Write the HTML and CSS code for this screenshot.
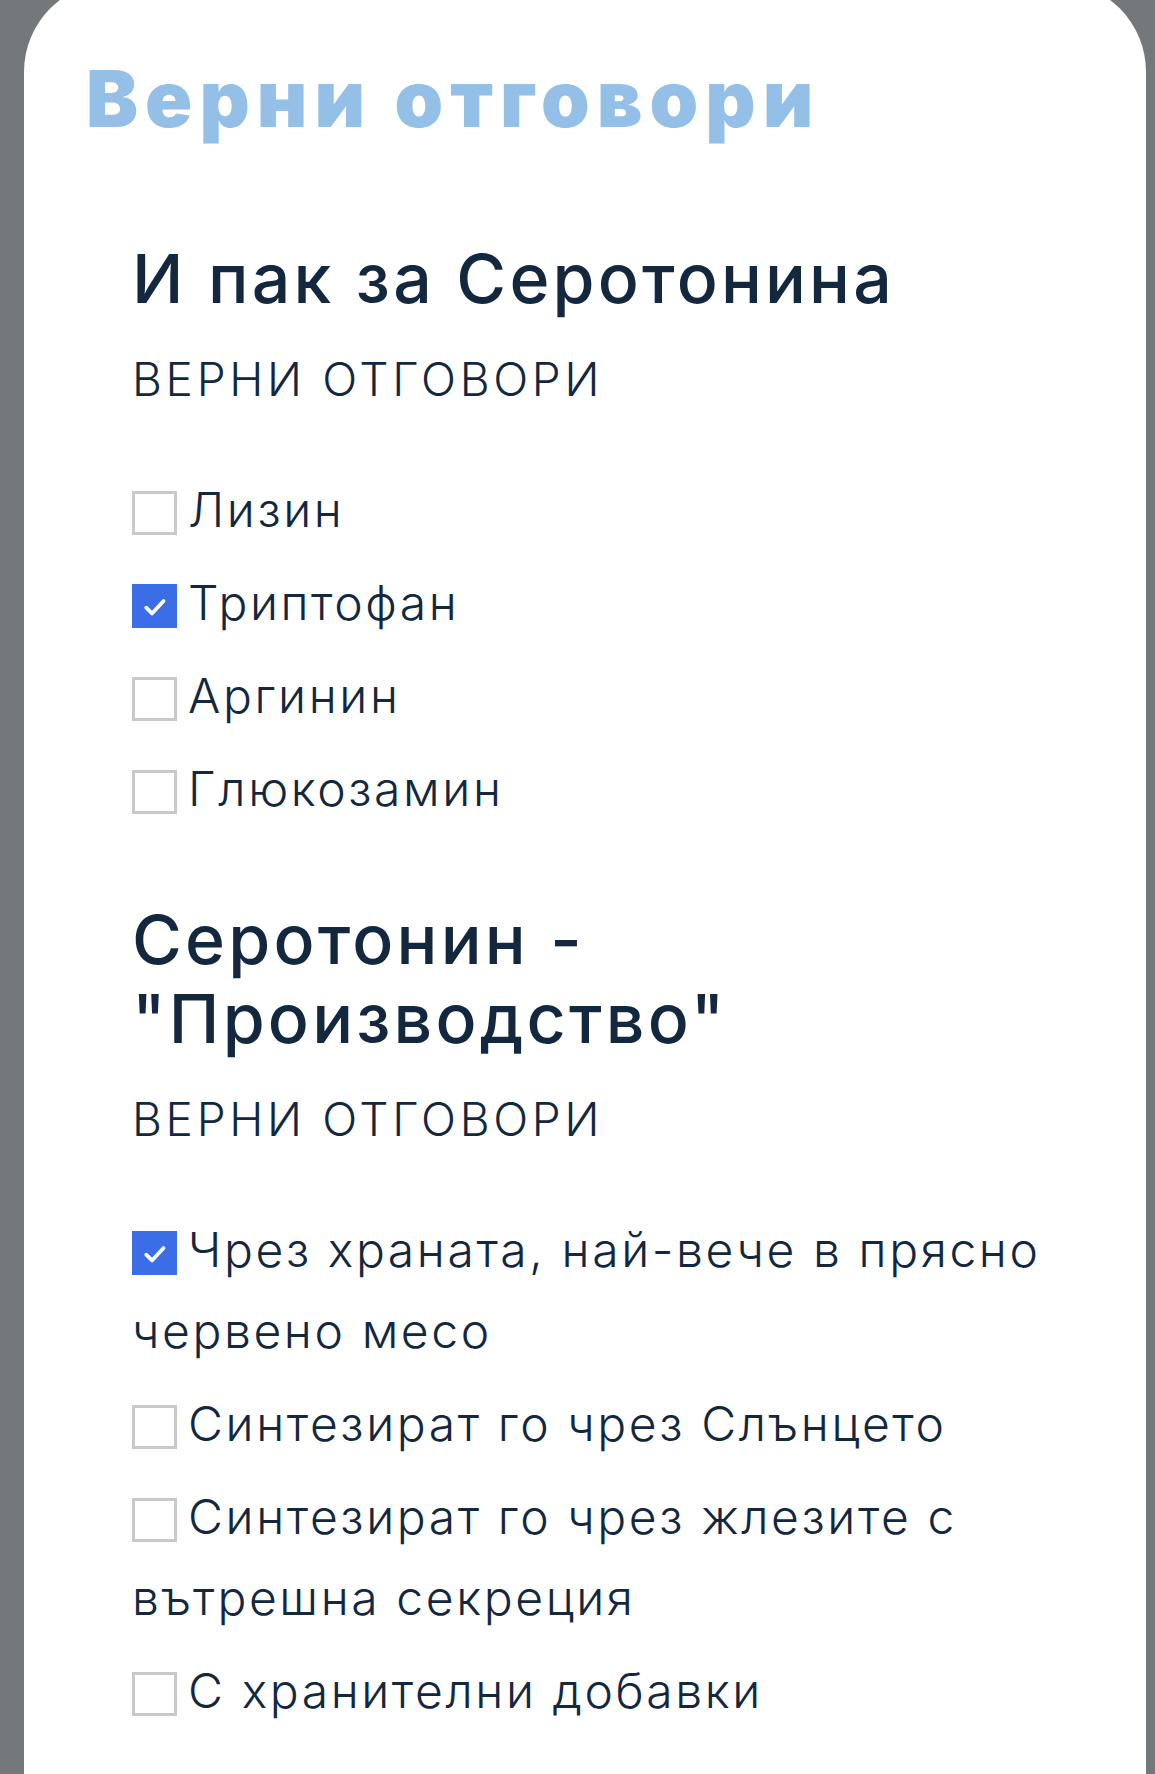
FILE: index.html
```html
<!DOCTYPE html>
<html lang="bg">
<head>
<meta charset="utf-8">
<title>Верни отговори</title>
<link rel="stylesheet" href="styles.css">
</head>
<body>
<main class="card">
  <h1 class="page-title">Верни отговори</h1>

  <section class="quiz">
    <h2 class="q-title">И пак за Серотонина</h2>
    <p class="q-label">ВЕРНИ ОТГОВОРИ</p>
    <ul class="options">
      <li class="option"><span class="box"></span>Лизин</li>
      <li class="option"><span class="box checked"><svg viewBox="0 0 46 46" class="tick"><path d="M13 25 L20 32 L34 17"/></svg></span>Триптофан</li>
      <li class="option"><span class="box"></span>Аргинин</li>
      <li class="option"><span class="box"></span>Глюкозамин</li>
    </ul>
  </section>

  <section class="quiz quiz-next">
    <h2 class="q-title">Серотонин - "Производство"</h2>
    <p class="q-label">ВЕРНИ ОТГОВОРИ</p>
    <ul class="options">
      <li class="option"><span class="box checked"><svg viewBox="0 0 46 46" class="tick"><path d="M13 25 L20 32 L34 17"/></svg></span>Чрез храната, най-вече в прясно червено месо</li>
      <li class="option"><span class="box"></span>Синтезират го чрез Слънцето</li>
      <li class="option"><span class="box"></span>Синтезират го чрез жлезите с вътрешна секреция</li>
      <li class="option"><span class="box"></span>С хранителни добавки</li>
    </ul>
  </section>
</main>
</body>
</html>
```

FILE: styles.css
```css
html, body {
  margin: 0;
  padding: 0;
}

body {
  background: #75787b;
  font-family: Inter, "Noto Sans", "Open Sans", sans-serif;
  color: #13283f;
}

.card {
  margin: -18px 9px 0 24px;
  background: #ffffff;
  border-radius: 90px 90px 0 0;
  padding: 70px 60px 120px 62px;
  min-height: 1800px;
  box-sizing: border-box;
}

.page-title {
  margin: 0;
  font-size: 78px;
  line-height: 94px;
  font-weight: 900;
  color: #94c0e8;
  letter-spacing: 7px;
}

.quiz {
  padding-left: 46px;
}

.q-title {
  margin: 93px 0 0;
  font-size: 68px;
  line-height: 79px;
  font-weight: 500;
  color: #13283f;
  letter-spacing: 3.2px;
}

.quiz-next .q-title {
  margin-top: 71px;
}

.q-label {
  margin: 33px 0 0;
  font-size: 46px;
  line-height: 56px;
  font-weight: 300;
  letter-spacing: 3.7px;
}

.options {
  list-style: none;
  margin: 62px 0 0;
  padding: 0;
  font-size: 48px;
  line-height: 81px;
  font-weight: 300;
  letter-spacing: 2.6px;
}

.option {
  margin: 0 0 12px;
}

.option:last-child {
  margin-bottom: 0;
}

.box {
  display: inline-block;
  width: 45px;
  height: 44px;
  box-sizing: border-box;
  border: 3px solid #c9c9c9;
  vertical-align: -8px;
  margin-right: 11px;
  background: #ffffff;
}

.box.checked {
  border-color: #3a6de6;
  background: #3a6de6;
}

.tick {
  display: block;
  width: 39px;
  height: 38px;
}

.tick path {
  fill: none;
  stroke: #ffffff;
  stroke-width: 4.5;
  stroke-linecap: round;
  stroke-linejoin: round;
}
```
